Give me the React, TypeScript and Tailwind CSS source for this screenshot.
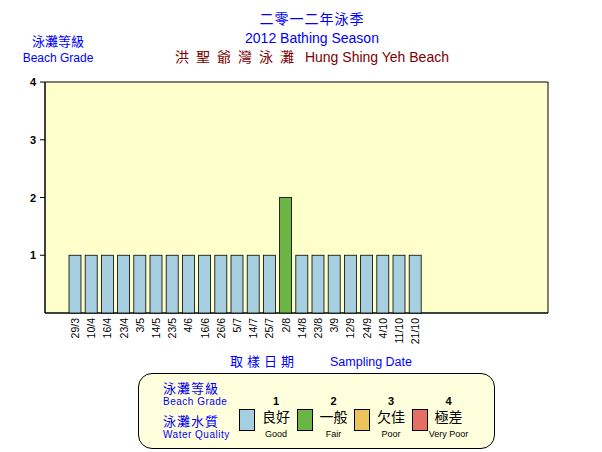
export default function App() {
  const dates = ["29/3","10/4","16/4","23/4","3/5","14/5","23/5","4/6","16/6","26/6","5/7","14/7","25/7","2/8","14/8","23/8","3/9","12/9","24/9","4/10","11/10","21/10"];
  const grades = dates.map((d) => (d === "2/8" ? 2 : 1));
  const y0 = 313, unit = 57.75;
  const legend = [
    { n: "1", zh: "良好", en: "Good", c: "bg-[#a6d0e2]" },
    { n: "2", zh: "一般", en: "Fair", c: "bg-[#6bb544]" },
    { n: "3", zh: "欠佳", en: "Poor", c: "bg-[#ecc35c]" },
    { n: "4", zh: "極差", en: "Very Poor", c: "bg-[#e37062]" },
  ];
  return (
    <div className="relative w-[602px] h-[452px] bg-white overflow-hidden" style={{ fontFamily: '"Liberation Sans", Arial, "Noto Sans CJK TC", sans-serif' }}>
      <div className="flex flex-col items-center pt-[10px] pl-[22px] text-[14px] leading-[19px]">
        <div className="text-[#0000ff] tracking-[1px]">二零一二年泳季</div>
        <div className="text-[#0000ff]">2012 Bathing Season</div>
        <div className="text-[#800000]"><span className="tracking-[7px]">洪聖爺灣泳灘</span> Hung Shing Yeh Beach</div>
      </div>
      <div className="absolute left-[18px] top-[34px] w-[80px] flex flex-col items-center text-[#0000ff] text-[12px] leading-[16px]">
        <div className="text-[13px]">泳灘等級</div>
        <div>Beach Grade</div>
      </div>
      <svg className="absolute left-0 top-0" width="602" height="372">
        <rect x="45" y="82" width="503" height="231" fill="#ffffcc" />
        <line x1="45" y1="82" x2="548" y2="82" stroke="#000" />
        <line x1="548" y1="82" x2="548" y2="313" stroke="#000" />
        <line x1="45" y1="82" x2="45" y2="313" stroke="#000" strokeWidth="1.5" />
        <line x1="45" y1="313" x2="548" y2="313" stroke="#000" strokeWidth="1.5" />
        {[1, 2, 3, 4].map((v) => (
          <g key={v}>
            <line x1="40" x2="45" y1={y0 - v * unit} y2={y0 - v * unit} stroke="#000" />
            <text x="36" y={y0 - v * unit + 4} fontSize="11" fontWeight="bold" textAnchor="end" fill="#000">{v}</text>
          </g>
        ))}
        {grades.map((g, i) => {
          const x = 69 + i * 16.2;
          const h = g * unit;
          return (
            <g key={i}>
              <rect x={x} y={y0 - h} width="12" height={h} fill={g === 2 ? "#6bb544" : "#a6d0e2"} stroke="#000" strokeWidth="0.8" />
              <text transform={`translate(${x + 10},${318}) rotate(-90)`} fontSize="10.5" textAnchor="end" fill="#000">{dates[i]}</text>
            </g>
          );
        })}
        <text x="230" y="366" fontSize="13" fill="#0000ff" letterSpacing="4">取樣日期</text>
        <text x="330" y="366" fontSize="12.5" fill="#0000ff">Sampling Date</text>
      </svg>
      <div className="absolute left-[138px] top-[373px] w-[357px] h-[76px] rounded-[14px] border border-black bg-[#ffffdd] flex items-center pl-[24px]">
        <div className="flex flex-col text-[#0000ff] leading-[13px] w-[76px] shrink-0 whitespace-nowrap">
          <div className="text-[13px] tracking-[1px]">泳灘等級</div>
          <div className="text-[10px] tracking-[0.5px] mb-[7px]">Beach Grade</div>
          <div className="text-[13px] tracking-[1px]">泳灘水質</div>
          <div className="text-[10px] tracking-[0.5px]">Water Quality</div>
        </div>
        <div className="flex pt-[14px]">
          {legend.map((l) => (
            <div key={l.n} className="flex items-start gap-[3px] w-[57.5px] shrink-0">
              <div className={`w-[16px] h-[22px] mt-[14px] border border-black shrink-0 ${l.c}`} />
              <div className="flex flex-col items-center leading-[13px] w-[36px]">
                <div className="text-[11px] font-bold">{l.n}</div>
                <div className="text-[14px] leading-[18px]">{l.zh}</div>
                <div className="text-[9px] mt-[2px] whitespace-nowrap">{l.en}</div>
              </div>
            </div>
          ))}
        </div>
      </div>
    </div>
  );
}
